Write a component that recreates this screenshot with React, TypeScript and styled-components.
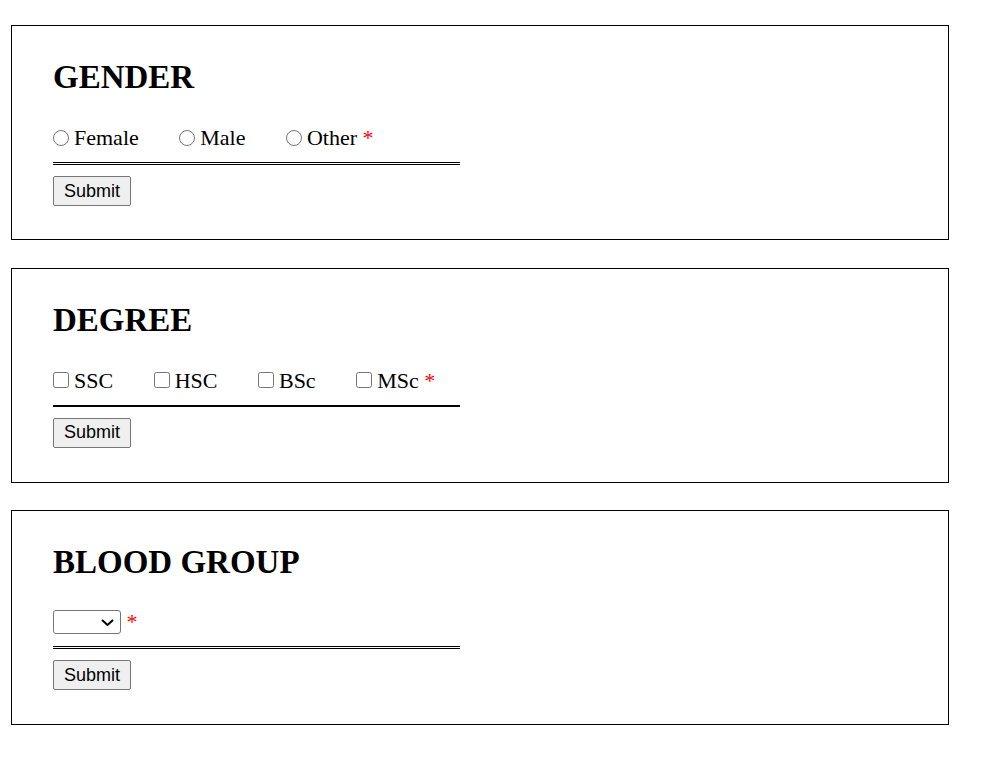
import React from "react";
import styled, { createGlobalStyle } from "styled-components";

const GlobalStyle = createGlobalStyle`
  body {
    margin: 0;
    background: #ffffff;
    font-family: "Liberation Serif", "Times New Roman", serif;
    color: #000000;
  }
`;

const Page = styled.div`
  display: flex;
  flex-direction: column;
  gap: 27.5px;
  padding: 25px 0 40px 11px;
`;

const Card = styled.form`
  box-sizing: border-box;
  width: 938px;
  height: 215px;
  border: 1px solid #000000;
  padding: 32px 41px 0 41px;
  display: flex;
  flex-direction: column;
  align-items: flex-start;
`;

const Title = styled.h1`
  margin: 0;
  font-size: 33px;
  line-height: 38px;
  font-weight: bold;
`;

const OptionRow = styled.div<{ $height?: number }>`
  display: flex;
  align-items: center;
  margin-top: 29px;
  height: ${(p) => p.$height || 25}px;
  font-size: 22px;
  line-height: 25px;
`;

const Option = styled.label`
  display: flex;
  align-items: center;
  margin-right: 40.5px;

  &:last-child {
    margin-right: 0;
  }
`;

const Choice = styled.input`
  width: 16px;
  height: 16px;
  margin: 0 5px 0 0;
`;

const Required = styled.span`
  color: #ff0000;
  margin-left: 5.5px;
`;

const SelectRow = styled(OptionRow)`
  align-items: flex-start;
  line-height: 24px;
`;

const SelectWrap = styled.span`
  position: relative;
  display: block;
  width: 68px;
  height: 24px;
`;

const BloodSelect = styled.select`
  box-sizing: border-box;
  display: block;
  appearance: none;
  width: 68px;
  height: 24px;
  margin: 0;
  padding: 0 20px 0 4px;
  font-size: 14px;
  border: 1px solid #767676;
  border-radius: 3px;
  background: #ffffff;
`;

const Chevron = styled.svg`
  position: absolute;
  left: 48px;
  top: 9px;
  width: 13px;
  height: 7px;
  pointer-events: none;
`;

const Divider = styled.div<{ $kind: "double" | "solid" }>`
  width: 407px;
  margin-top: 12px;
  border-bottom: ${(p) => (p.$kind === "double" ? "3px double #000000" : "2px solid #000000")};
`;

const SubmitButton = styled.button`
  margin-top: 11px;
  height: 30px;
  padding: 0 10px;
  font-family: "Liberation Sans", Arial, sans-serif;
  font-size: 18px;
  color: #000000;
  background: #efefef;
  border: 1px solid #767676;
  border-radius: 2px;
`;

const App = () => {
  return (
    <>
      <GlobalStyle />
      <Page>
        <Card onSubmit={(e) => e.preventDefault()}>
          <Title>GENDER</Title>
          <OptionRow>
            <Option>
              <Choice type="radio" name="gender" />
              Female
            </Option>
            <Option>
              <Choice type="radio" name="gender" />
              Male
            </Option>
            <Option>
              <Choice type="radio" name="gender" />
              Other<Required>*</Required>
            </Option>
          </OptionRow>
          <Divider $kind="double" />
          <SubmitButton type="submit">Submit</SubmitButton>
        </Card>

        <Card onSubmit={(e) => e.preventDefault()}>
          <Title>DEGREE</Title>
          <OptionRow>
            <Option>
              <Choice type="checkbox" />
              SSC
            </Option>
            <Option>
              <Choice type="checkbox" />
              HSC
            </Option>
            <Option>
              <Choice type="checkbox" />
              BSc
            </Option>
            <Option>
              <Choice type="checkbox" />
              MSc<Required>*</Required>
            </Option>
          </OptionRow>
          <Divider $kind="solid" />
          <SubmitButton type="submit">Submit</SubmitButton>
        </Card>

        <Card onSubmit={(e) => e.preventDefault()}>
          <Title>BLOOD GROUP</Title>
          <SelectRow $height={24}>
            <SelectWrap>
              <BloodSelect defaultValue="">
                <option value=""></option>
                <option value="A+">A+</option>
                <option value="A-">A-</option>
                <option value="B+">B+</option>
                <option value="B-">B-</option>
                <option value="AB+">AB+</option>
                <option value="AB-">AB-</option>
                <option value="O+">O+</option>
                <option value="O-">O-</option>
              </BloodSelect>
              <Chevron viewBox="0 0 13 7">
                <path d="M1 1 L6.5 6 L12 1" fill="none" stroke="#000000" strokeWidth="2" />
              </Chevron>
            </SelectWrap>
            <Required>*</Required>
          </SelectRow>
          <Divider $kind="double" />
          <SubmitButton type="submit">Submit</SubmitButton>
        </Card>
      </Page>
    </>
  );
};

export default App;
